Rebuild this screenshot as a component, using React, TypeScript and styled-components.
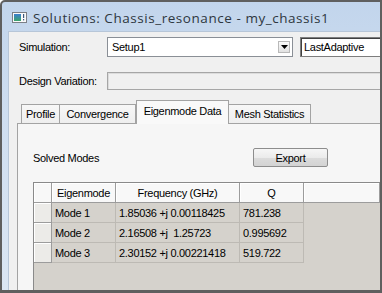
import React from 'react';
import styled, { createGlobalStyle } from 'styled-components';

const GlobalStyle = createGlobalStyle`
  body {
    margin: 0;
    background: #ffffff;
    font-family: "Liberation Sans", Arial, sans-serif;
  }
`;

// Window chrome
const Window = styled.div`
  width: 382px;
  height: 293px;
  box-sizing: border-box;
  border: 2px solid #5f5f5f;
  border-bottom-width: 3px;
  border-top-left-radius: 5px;
  background: linear-gradient(180deg, #c2d5ec 0%, #cfdef0 40%, #dbe6f3 100%);
  display: flex;
  flex-direction: column;
  overflow: hidden;
`;

const TitleBar = styled.div`
  height: 29px;
  flex: none;
  display: flex;
  align-items: center;
  gap: 6px;
  padding-left: 10px;
  padding-top: 2px;
  box-sizing: border-box;
`;

const TitleText = styled.span`
  font-family: "Open Sans", "Noto Sans", sans-serif;
  font-size: 13.5px;
  color: #2e3640;
  white-space: nowrap;
  letter-spacing: 0.55px;
`;

const Client = styled.div`
  flex: 1;
  margin-left: 6px;
  background: #f0f0f0;
  border-top: 1px solid #b7c6d8;
  border-left: 1px solid #b7c6d8;
  display: flex;
  flex-direction: column;
  overflow: hidden;
  font-size: 11px;
  letter-spacing: -0.3px;
  color: #000;
`;

// Form rows
const FormRow = styled.div<{ top: number; h: number }>`
  display: flex;
  align-items: center;
  margin-top: ${({ top }) => top}px;
  height: ${({ h }) => h}px;
  flex: none;
`;

const Label = styled.span`
  width: 88px;
  padding-left: 10px;
  flex: none;
  white-space: nowrap;
`;

const Combo = styled.div`
  width: 186px;
  height: 100%;
  box-sizing: border-box;
  background: #fff;
  border: 1px solid #8a8f96;
  display: flex;
  align-items: center;
  justify-content: space-between;
  padding: 0 2px 0 4px;
`;

const DropButton = styled.div`
  width: 12px;
  height: 12px;
  box-sizing: border-box;
  border: 1px solid #b9b9b9;
  background: linear-gradient(180deg, #fbfbfb, #e2e2e2);
  display: flex;
  align-items: center;
  justify-content: center;
`;

const TextBox = styled.div<{ disabled?: boolean }>`
  flex: 1;
  height: 100%;
  box-sizing: border-box;
  margin-left: ${({ disabled }) => (disabled ? 0 : 7)}px;
  background: ${({ disabled }) => (disabled ? '#f0f0f0' : '#ffffff')};
  border: 1px solid ${({ disabled }) => (disabled ? '#a6a6a6' : '#7d7d7d')};
  border-right: none;
  box-shadow: inset 1px 1px 0 ${({ disabled }) => (disabled ? '#dcdcdc' : '#404040')};
  display: flex;
  align-items: center;
  padding-left: 3px;
  white-space: nowrap;
`;

// Tabs
const TabArea = styled.div`
  flex: 1;
  margin: 10px 0 0 8px;
  display: flex;
  flex-direction: column;
  min-height: 0;
`;

const TabStrip = styled.div`
  height: 23px;
  flex: none;
  display: flex;
  align-items: flex-end;
  padding-left: 4px;
  position: relative;
  z-index: 1;
`;

const Tab = styled.div<{ w: number; active?: boolean }>`
  width: ${({ w }) => w}px;
  height: ${({ active }) => (active ? 24 : 19)}px;
  margin-bottom: ${({ active }) => (active ? -1 : 0)}px;
  box-sizing: border-box;
  border: 1px solid #a3a3a3;
  border-bottom: none;
  border-left-width: ${({ active }) => (active ? 1 : 0)}px;
  background: ${({ active }) => (active ? '#f9f9f9' : 'linear-gradient(180deg, #f7f7f7, #eeeeee)')};
  display: flex;
  align-items: center;
  justify-content: center;
  padding-bottom: ${({ active }) => (active ? 3 : 0)}px;
  white-space: nowrap;
  &:first-child {
    border-left-width: 1px;
  }
`;

const Panel = styled.div`
  flex: 1;
  background: #f6f6f6;
  border-top: 1px solid #a3a3a3;
  border-left: 1px solid #a3a3a3;
  padding: 24px 0 0 15px;
  display: flex;
  flex-direction: column;
  min-height: 0;
`;

const ToolRow = styled.div`
  height: 19px;
  flex: none;
  display: flex;
  align-items: center;
`;

const SectionLabel = styled.span`
  width: 220px;
`;

const Button = styled.div`
  width: 75px;
  height: 19px;
  box-sizing: border-box;
  border: 1px solid #8d8d8d;
  border-radius: 2px;
  background: linear-gradient(180deg, #f6f6f6 0%, #ebebeb 50%, #dcdcdc 51%, #d3d3d3 100%);
  display: flex;
  align-items: center;
  justify-content: center;
`;

// Grid
const Grid = styled.div`
  flex: 1;
  margin-top: 15px;
  background: #d5d2cc;
  border-top: 1px solid #8a8a8a;
  border-left: 1px solid #8a8a8a;
  display: grid;
  grid-template-columns: 18px 64px 124px 64px 1fr;
  grid-auto-rows: 20px;
  align-content: start;
`;

const HeadCell = styled.div`
  background: #f8f8f8;
  border-right: 1px solid #9c9c9c;
  border-bottom: 1px solid #9c9c9c;
  box-shadow: inset 1px 1px 0 #ffffff;
  display: flex;
  align-items: center;
  justify-content: center;
  white-space: nowrap;
`;

const RowHead = styled.div`
  background: #ecebe8;
  border-right: 1px solid #9c9c9c;
  border-bottom: 1px solid #9c9c9c;
  box-shadow: inset 1px 1px 0 #ffffff;
`;

const Cell = styled.div`
  border-right: 1px solid #bdbab4;
  border-bottom: 1px solid #bdbab4;
  display: flex;
  align-items: center;
  padding-left: 3px;
  white-space: pre;
  overflow: hidden;
`;

const Filler = styled.div``;

const AppIcon = () => (
  <svg width="15" height="11" viewBox="0 0 15 11">
    <defs>
      <linearGradient id="ig" x1="0" y1="0" x2="0" y2="1">
        <stop offset="0" stopColor="#3b7fd0" />
        <stop offset="1" stopColor="#3aa36a" />
      </linearGradient>
    </defs>
    <rect x="0.5" y="0.5" width="14" height="10" fill="#fafafa" stroke="#7b7f86" />
    <rect x="2" y="2" width="7" height="7" fill="url(#ig)" />
    <rect x="11" y="2" width="1.2" height="4" fill="#3d5a80" />
    <rect x="11" y="7" width="1.2" height="1.4" fill="#3d5a80" />
  </svg>
);

const Arrow = () => (
  <svg width="7" height="4" viewBox="0 0 7 4">
    <path d="M0 0 H7 L3.5 4 Z" fill="#000" />
  </svg>
);

const modes = [
  { name: 'Mode 1', freq: '1.85036 +j 0.00118425', q: '781.238' },
  { name: 'Mode 2', freq: '2.16508 +j  1.25723', q: '0.995692' },
  { name: 'Mode 3', freq: '2.30152 +j 0.00221418', q: '519.722' },
];

const App: React.FC = () => (
  <>
    <GlobalStyle />
    <Window>
      <TitleBar>
        <AppIcon />
        <TitleText>Solutions: Chassis_resonance - my_chassis1</TitleText>
      </TitleBar>
      <Client>
        <FormRow top={5} h={20}>
          <Label>Simulation:</Label>
          <Combo>
            <span>Setup1</span>
            <DropButton>
              <Arrow />
            </DropButton>
          </Combo>
          <TextBox>LastAdaptive</TextBox>
        </FormRow>
        <FormRow top={15} h={18}>
          <Label>Design Variation:</Label>
          <TextBox disabled />
        </FormRow>
        <TabArea>
          <TabStrip>
            <Tab w={39}>Profile</Tab>
            <Tab w={76}>Convergence</Tab>
            <Tab w={93} active>Eigenmode Data</Tab>
            <Tab w={82}>Mesh Statistics</Tab>
          </TabStrip>
          <Panel>
            <ToolRow>
              <SectionLabel>Solved Modes</SectionLabel>
              <Button>Export</Button>
            </ToolRow>
            <Grid>
              <HeadCell />
              <HeadCell>Eigenmode</HeadCell>
              <HeadCell>Frequency (GHz)</HeadCell>
              <HeadCell>Q</HeadCell>
              <HeadCell />
              {modes.map((m) => (
                <React.Fragment key={m.name}>
                  <RowHead />
                  <Cell>{m.name}</Cell>
                  <Cell>{m.freq}</Cell>
                  <Cell>{m.q}</Cell>
                  <Filler />
                </React.Fragment>
              ))}
            </Grid>
          </Panel>
        </TabArea>
      </Client>
    </Window>
  </>
);

export default App;
